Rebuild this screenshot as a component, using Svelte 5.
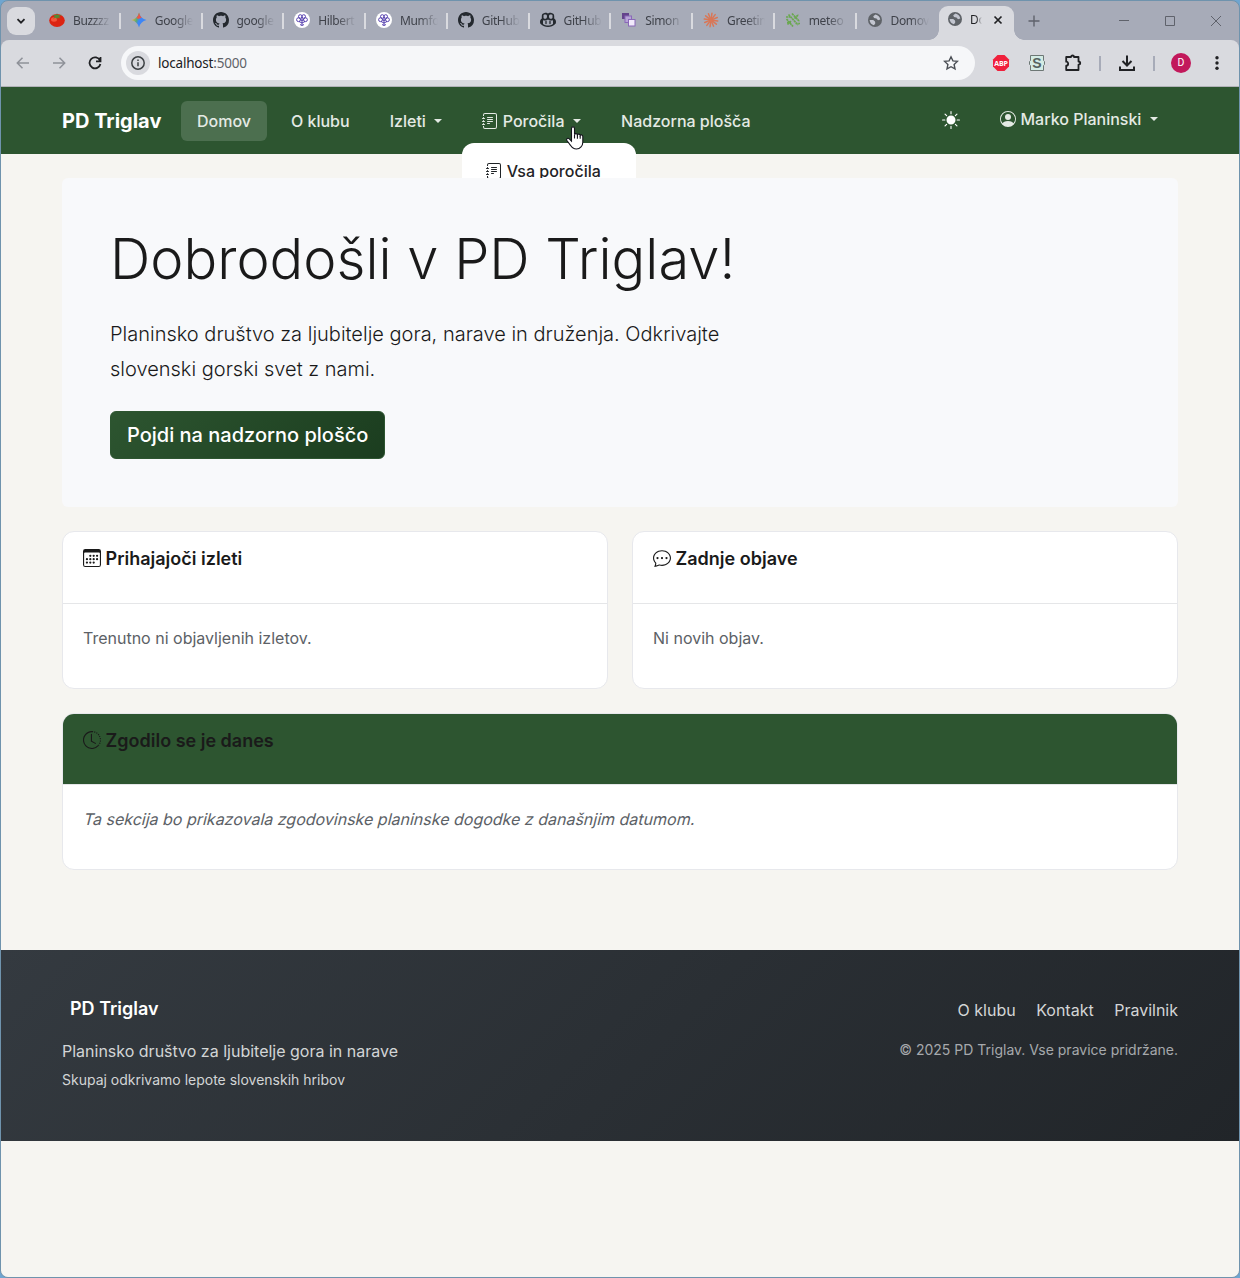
<script>
  const tabs = [
    { icon: 'tomato', title: 'Buzzzz' },
    { icon: 'gemini', title: 'Google' },
    { icon: 'github', title: 'google' },
    { icon: 'brain', title: 'Hilbert' },
    { icon: 'brain', title: 'Mumfo' },
    { icon: 'github', title: 'GitHub' },
    { icon: 'copilot', title: 'GitHub' },
    { icon: 'squares', title: 'Simon' },
    { icon: 'burst', title: 'Greetin' },
    { icon: 'meteor', title: 'meteo' },
    { icon: 'globe', title: 'Domov' }
  ];
  const rays = Array.from({ length: 12 }, (_, i) => i * 30);
  const footerLinks = ['O klubu', 'Kontakt', 'Pravilnik'];
</script>

{#snippet favicon(name)}
  <svg class="fav" viewBox="0 0 16 16" width="16" height="16">
    {#if name === 'tomato'}
      <ellipse cx="8" cy="8.5" rx="7.8" ry="6.500" fill="#dc2412" />
      <ellipse cx="5" cy="7.5" rx="3" ry="2.2" fill="#f5543a" />
      <path d="M8 1l.8 2.3 4-.6-2.9 1.8 1.7 2.1-3-1.2L8 8 7.3 5.5 4 6.7l2-2.2-2.8-1.7 4 .5z" fill="#4e8f35" />
    {:else if name === 'gemini'}
      <defs>
        <linearGradient id="gem" x1="0" y1="0.2" x2="1" y2="0.6">
          <stop offset="0.1" stop-color="#f5b72c" /><stop offset="0.4" stop-color="#58a878" /><stop offset="0.55" stop-color="#3d86f6" />
        </linearGradient>
      </defs>
      <path d="M8 .5C9 4.500 11.500 7 15.500 8 11.500 9 9 11.500 8 15.500 7 11.500 4.500 9 .5 8 4.500 7 7 4.500 8 .5z" fill="url(#gem)" />
      <path d="M8 .5C8.600 3 9.600 4.700 10.700 5.700L7 7 5.500 5.700C7 4.500 7.600 2.500 8 .5z" fill="#ec5548" />
    {:else if name === 'github'}
      <path fill="#24292f" d="M8 0C3.58 0 0 3.58 0 8c0 3.54 2.29 6.53 5.47 7.59.4.07.55-.17.55-.38 0-.19-.01-.82-.01-1.49-2.01.37-2.53-.49-2.69-.94-.09-.23-.48-.94-.82-1.13-.28-.15-.68-.52-.01-.53.63-.01 1.08.58 1.23.82.72 1.21 1.87.87 2.33.66.07-.52.28-.87.51-1.07-1.78-.2-3.64-.89-3.64-3.95 0-.87.31-1.59.82-2.15-.08-.2-.36-1.02.08-2.12 0 0 .67-.21 2.2.82.64-.18 1.32-.27 2-.27s1.36.09 2 .27c1.53-1.04 2.2-.82 2.2-.82.44 1.100.16 1.920.08 2.120.51.56.82 1.270.82 2.150 0 3.070-1.870 3.750-3.650 3.950.29.25.54.73.54 1.480 0 1.070-.01 1.930-.01 2.200 0 .21.15.46.55.38A8.010 8.010 0 0 0 16 8c0-4.420-3.580-8-8-8z" />
    {:else if name === 'brain'}
      <circle cx="8" cy="8" r="8" fill="#fff" />
      <g fill="none" stroke="#4a32a8" stroke-width=".9">
        <circle cx="6.300" cy="4.500" r="1.800" /><circle cx="9.700" cy="4.500" r="1.800" />
        <circle cx="4.500" cy="7.700" r="1.900" /><circle cx="11.500" cy="7.700" r="1.900" />
        <path d="M8 5v8.500M5 9.500l3 1.500 3-1.500M6 12.500l2 1 2-1M6 7.500l2 1 2-1" />
      </g>
    {:else if name === 'copilot'}
      <path fill="#24292f" fill-rule="evenodd" d="M4.500 1C6.300.6 7.500 1.100 8 1.700 8.500 1.100 9.700.6 11.500 1c2 .3 2.700 1.600 2.700 3.200v2.300C15.500 7.300 16 8.600 16 10c0 .9-.2 1.500-.7 2-1.800 1.800-4.700 3-7.300 3s-5.500-1.200-7.300-3C.2 11.500 0 10.900 0 10c0-1.400.5-2.700 1.800-3.500V4.200C1.800 2.600 2.500 1.300 4.500 1zM3.500 3.500v2c0 1 .7 1.300 1.700 1.300S7 6 7 4.500 6.500 2.600 5.300 2.600 3.500 2.800 3.500 3.500zM12.500 3.500c0-.7-.6-.9-1.800-.9S9 3 9 4.500s.8 2.300 1.800 2.300 1.700-.3 1.700-1.300zM3 8.200V12c1.500 1 3.300 1.600 5 1.600s3.500-.6 5-1.600V8.200C11 8.800 9 8.600 8 7.500 7 8.600 5 8.800 3 8.200z" />
      <path d="M6 9.500v2M10 9.500v2" stroke="#24292f" stroke-width="1.300" stroke-linecap="round" />
    {:else if name === 'squares'}
      <rect x="1" y="1" width="7" height="6" fill="#64438c" />
      <rect x="4" y="4" width="6.500" height="6.500" fill="#b8a4d8" stroke="#8a68b8" />
      <rect x="7.500" y="7.500" width="6.500" height="6.500" fill="#f1e9fb" stroke="#8a68b8" />
    {:else if name === 'burst'}
      <g stroke="#d97757" stroke-width="1.500" stroke-linecap="round">
        {#each rays as r}<path d="M8 7V1.200" transform="rotate({r + 8} 8 8)" />{/each}
      </g>
      <circle cx="8" cy="8" r="2.200" fill="#d97757" />
    {:else if name === 'meteor'}
      <g stroke="#6aa84f" stroke-width="1.700" stroke-dasharray="2.200 .5">
        <path d="M3.500 2.500l9.500 10.500M2.500 12.500l3.500-3.500M9.500 6.500l4-4M7 1.500l7.500 8M1.500 7l6.500 7.500M1 5h4M10.500 11.500h4.500M2 10.500h4" />
      </g>
    {:else}
      <circle cx="8" cy="8" r="7" fill="#5f6368" />
      <path d="M8.500 2.500C11 3 13 5 13.300 7.500L11 8.200 9.500 6.500 7 6l-.8-1.700zM2.600 8h3.600l1.800 1.400.3 1.800L7 13.200C4.500 12.800 2.700 10.500 2.600 8z" fill="#c3c6d0" />
    {/if}
  </svg>
{/snippet}

{#snippet journal()}
  <svg class="bi" viewBox="0 0 16 16" fill="currentColor">
    <path d="M5 10.500a.5.5 0 0 1 .5-.5h2a.5.5 0 0 1 0 1h-2a.5.5 0 0 1-.5-.5m0-2a.5.5 0 0 1 .5-.5h5a.5.5 0 0 1 0 1h-5a.5.5 0 0 1-.5-.5m0-2a.5.5 0 0 1 .5-.5h5a.5.5 0 0 1 0 1h-5a.5.5 0 0 1-.5-.5m0-2a.5.5 0 0 1 .5-.5h5a.5.5 0 0 1 0 1h-5a.5.5 0 0 1-.5-.5" />
    <path d="M3 0h10a2 2 0 0 1 2 2v12a2 2 0 0 1-2 2H3a2 2 0 0 1-2-2v-1h1v1a1 1 0 0 0 1 1h10a1 1 0 0 0 1-1V2a1 1 0 0 0-1-1H3a1 1 0 0 0-1 1v1H1V2a2 2 0 0 1 2-2" />
    <path d="M1 5v-.5a.5.5 0 0 1 1 0V5h.5a.5.5 0 0 1 0 1h-2a.5.5 0 0 1 0-1zm0 3v-.5a.5.5 0 0 1 1 0V8h.5a.5.5 0 0 1 0 1h-2a.5.5 0 0 1 0-1zm0 3v-.5a.5.5 0 0 1 1 0v.5h.5a.5.5 0 0 1 0 1h-2a.5.5 0 0 1 0-1z" />
  </svg>
{/snippet}

<div class="desktop">
  <div class="window">
    <div class="tabstrip">
      <button class="tabsearch" aria-label="Search tabs">
        <svg width="10" height="10" viewBox="0 0 10 10"><path d="M1.500 3.200L5 6.700l3.500-3.500" fill="none" stroke="#202124" stroke-width="1.800" /></svg>
      </button>
      <div class="tabs">
        {#each tabs as tab, i}
          <div class="tab" class:last={i === tabs.length - 1}>
            {@render favicon(tab.icon)}
            <span class="title">{tab.title}</span>
          </div>
        {/each}
      </div>
      <div class="tab-active">
        {@render favicon('globe')}
        <span class="title short">Do</span>
        <svg width="10" height="10" viewBox="0 0 10 10"><path d="M1.500 1.500l7 7M8.500 1.500l-7 7" stroke="#202124" stroke-width="1.700" /></svg>
      </div>
      <svg class="plus" width="12" height="12" viewBox="0 0 12 12"><path d="M6 .5v11M.5 6h11" stroke="#5f626b" stroke-width="1.400" /></svg>
      <div class="controls">
        <svg width="12" height="12" viewBox="0 0 12 12"><path d="M1 5.500h10" stroke="#5f626b" /></svg>
        <svg width="12" height="12" viewBox="0 0 12 12"><path d="M1.500 1.500h9v9h-9z" fill="none" stroke="#5f626b" /></svg>
        <svg width="12" height="12" viewBox="0 0 12 12"><path d="M1 1l10 10M11 1L1 11" stroke="#5f626b" /></svg>
      </div>
    </div>

    <div class="toolbar">
      <div class="history">
        <svg width="14" height="14" viewBox="0 0 14 14" fill="none" stroke="#8f9299" stroke-width="1.500"><path d="M13 7H1.500M6.500 1.700L1.300 7l5.200 5.300" /></svg>
        <svg width="14" height="14" viewBox="0 0 14 14" fill="none" stroke="#8f9299" stroke-width="1.500"><path d="M1 7h11.500M7.500 1.700L12.700 7l-5.200 5.300" /></svg>
        <svg width="14" height="14" viewBox="0 0 14 14" fill="none" stroke="#202124" stroke-width="1.800"><path d="M12 4.500A5.500 5.500 0 1 0 12.400 8M12.500 1v4.300H8" /></svg>
      </div>
      <div class="omnibox">
        <span class="info">
          <svg width="14" height="14" viewBox="0 0 14 14"><circle cx="7" cy="7" r="6.200" fill="none" stroke="#3c4043" stroke-width="1.500" /><path d="M7 6.200v4M7 3.500v1.500" stroke="#3c4043" stroke-width="1.500" /></svg>
        </span>
        <span class="url">localhost<em>:5000</em></span>
        <svg class="star" width="16" height="16" viewBox="0 0 16 16"><path d="M8 1.800l1.900 4.100 4.500.5-3.300 3.100.9 4.400L8 11.700l-4 2.200.9-4.400L1.600 6.400l4.500-.5z" fill="none" stroke="#4c5056" stroke-width="1.400" /></svg>
      </div>
      <div class="extensions">
        <svg width="18" height="18" viewBox="0 0 18 18"><path d="M5.500 1h7L17 5.500v7L12.500 17h-7L1 12.500v-7z" fill="#f0203c" /><text x="9" y="11.900" text-anchor="middle" class="abp">ABP</text></svg>
        <svg width="18" height="18" viewBox="0 0 18 18"><path d="M2.500 1.500h13v5l1 1v3l-1 1v5h-13v-5l-1-1v-3l1-1z" fill="#d3ebe4" stroke="#6d7775" /><text x="9" y="14.200" text-anchor="middle" class="sext">S</text></svg>
        <svg width="18" height="18" viewBox="0 0 18 18"><path d="M2.200 3h4.800c0-2 3-2 3 0h4.500v4.500c2.300 0 2.300 3.200 0 3.200V16H2.200v-4.300c2.600 0 2.600-4 0-4z" fill="none" stroke="#202124" stroke-width="1.800" stroke-linejoin="round" /></svg>
        <i class="sep"></i>
        <svg width="18" height="18" viewBox="0 0 18 18" fill="none" stroke="#202124" stroke-width="2"><path d="M9 1.500v9.500M4.500 7L9 11.500 13.500 7M2 12.500V16h14v-3.500" /></svg>
        <i class="sep"></i>
        <span class="avatar">D</span>
        <svg width="4" height="16" viewBox="0 0 4 16" fill="#202124"><circle cx="2" cy="2.700" r="1.700" /><circle cx="2" cy="8" r="1.700" /><circle cx="2" cy="13.300" r="1.700" /></svg>
      </div>
    </div>

    <div class="page">
      <nav class="navbar">
        <span class="brand">PD Triglav</span>
        <div class="links">
          <a class="link active" href="#domov">Domov</a>
          <a class="link" href="#klub">O klubu</a>
          <a class="link caret" href="#izleti">Izleti</a>
          <div class="dropdown">
            <a class="link caret" href="#porocila">{@render journal()} Poročila</a>
            <div class="menu">
              <div class="item">{@render journal()} Vsa poročila</div>
            </div>
            <svg class="pointer" width="20" height="25" viewBox="0 0 20 25">
              <path d="M5.500 2.500c0-2.200 3-2.200 3 0v6c.3-1.200 2.700-1.200 2.900.3.500-1.100 2.600-.9 2.800.6.600-.9 2.600-.7 2.600 1.200v5.700c0 3.500-2.600 6.700-6.300 6.700-3 0-4.600-1.300-6-3.700L.9 14.500c-1-1.800 1.100-3 2.400-1.600l2.200 2.200z" fill="#fff" stroke="#14141c" stroke-width="1.100" />
              <path d="M8.500 8.500v4M11.400 9v3.700M14.200 9.800v3" stroke="#14141c" stroke-width="1.100" />
            </svg>
          </div>
          <a class="link" href="#plosca">Nadzorna plošča</a>
        </div>
        <div class="user">
          <svg class="sun" width="18" height="18" viewBox="0 0 16 16" fill="#fff"><path d="M8 12a4 4 0 1 0 0-8 4 4 0 0 0 0 8M8 0a.5.5 0 0 1 .5.5v2a.5.5 0 0 1-1 0v-2A.5.5 0 0 1 8 0m0 13a.5.5 0 0 1 .5.5v2a.5.5 0 0 1-1 0v-2A.5.5 0 0 1 8 13m8-5a.5.5 0 0 1-.5.5h-2a.5.5 0 0 1 0-1h2a.5.5 0 0 1 .5.5M3 8a.5.5 0 0 1-.5.5h-2a.5.5 0 0 1 0-1h2A.5.5 0 0 1 3 8m10.657-5.657a.5.5 0 0 1 0 .707l-1.414 1.415a.5.5 0 1 1-.707-.708l1.414-1.414a.5.5 0 0 1 .707 0m-9.193 9.193a.5.5 0 0 1 0 .707L3.050 13.657a.5.5 0 0 1-.707-.707l1.414-1.414a.5.5 0 0 1 .707 0m9.193 2.121a.5.5 0 0 1-.707 0l-1.414-1.414a.5.5 0 0 1 .707-.707l1.414 1.414a.5.5 0 0 1 0 .707M4.464 4.465a.5.5 0 0 1-.707 0L2.343 3.050a.5.5 0 1 1 .707-.707l1.414 1.414a.5.5 0 0 1 0 .708" /></svg>
          <a class="link caret account" href="#racun">
            <svg class="bi" viewBox="0 0 16 16" fill="currentColor"><path d="M11 6a3 3 0 1 1-6 0 3 3 0 0 1 6 0" /><path fill-rule="evenodd" d="M0 8a8 8 0 1 1 16 0A8 8 0 0 1 0 8m8-7a7 7 0 0 0-5.468 11.370C3.242 11.226 4.805 10 8 10s4.757 1.225 5.468 2.370A7 7 0 0 0 8 1" /></svg>
            Marko Planinski</a>
        </div>
      </nav>

      <main>
        <section class="hero">
          <h1>Dobrodošli v PD Triglav!</h1>
          <p>Planinsko društvo za ljubitelje gora, narave in druženja. Odkrivajte<br />slovenski gorski svet z nami.</p>
          <a class="cta" href="#plosca">Pojdi na nadzorno ploščo</a>
        </section>

        <div class="row">
          <section class="card">
            <h5>
              <svg class="bi" viewBox="0 0 16 16" fill="currentColor"><path d="M14 0H2a2 2 0 0 0-2 2v12a2 2 0 0 0 2 2h12a2 2 0 0 0 2-2V2a2 2 0 0 0-2-2M1 3.857C1 3.384 1.448 3 2 3h12c.552 0 1 .384 1 .857v10.286c0 .473-.448.857-1 .857H2c-.552 0-1-.384-1-.857z" />
                <path d="M6.500 7a1 1 0 1 0 0-2 1 1 0 0 0 0 2m3 0a1 1 0 1 0 0-2 1 1 0 0 0 0 2m3 0a1 1 0 1 0 0-2 1 1 0 0 0 0 2m-9 3a1 1 0 1 0 0-2 1 1 0 0 0 0 2m3 0a1 1 0 1 0 0-2 1 1 0 0 0 0 2m3 0a1 1 0 1 0 0-2 1 1 0 0 0 0 2m3 0a1 1 0 1 0 0-2 1 1 0 0 0 0 2m-9 3a1 1 0 1 0 0-2 1 1 0 0 0 0 2m3 0a1 1 0 1 0 0-2 1 1 0 0 0 0 2m3 0a1 1 0 1 0 0-2 1 1 0 0 0 0 2" /></svg>
              Prihajajoči izleti
            </h5>
            <p>Trenutno ni objavljenih izletov.</p>
          </section>
          <section class="card">
            <h5>
              <svg class="bi" viewBox="0 0 16 16" fill="currentColor"><path d="M5 8a1 1 0 1 1-2 0 1 1 0 0 1 2 0m4 0a1 1 0 1 1-2 0 1 1 0 0 1 2 0m3 1a1 1 0 1 0 0-2 1 1 0 0 0 0 2" /><path d="m2.165 15.803.02-.004c1.830-.363 2.948-.842 3.468-1.105A9 9 0 0 0 8 15c4.418 0 8-3.134 8-7s-3.582-7-8-7-8 3.134-8 7c0 1.760.743 3.370 1.970 4.600a10.400 10.400 0 0 1-.524 2.318l-.003.011a11 11 0 0 1-.244.637c-.079.186.074.394.273.362a22 22 0 0 0 .693-.125m.8-3.108a1 1 0 0 0-.287-.801C1.618 10.830 1 9.468 1 8c0-3.192 3.004-6 7-6s7 2.808 7 6-3.004 6-7 6a8 8 0 0 1-2.088-.272 1 1 0 0 0-.711.074c-.387.196-1.240.570-2.634.893a11 11 0 0 0 .398-2" /></svg>
              Zadnje objave
            </h5>
            <p>Ni novih objav.</p>
          </section>
        </div>

        <section class="card today">
          <h5>
            <svg class="bi" viewBox="0 0 16 16" fill="none" stroke="currentColor"><path d="M8 .5A7.500 7.500 0 1 0 13.500 13.100" /><path d="M8 .5A7.500 7.500 0 0 1 13.500 13.100" stroke-dasharray="1 1" /><path d="M7.500 3v6l3.500 2" stroke-linecap="round" /></svg>
            Zgodilo se je danes
          </h5>
          <p><span class="slanted">Ta sekcija bo prikazovala zgodovinske planinske dogodke z današnjim datumom.</span></p>
        </section>
      </main>

      <footer>
        <div>
          <h6>PD Triglav</h6>
          <p class="tagline">Planinsko društvo za ljubitelje gora in narave</p>
          <p class="small">Skupaj odkrivamo lepote slovenskih hribov</p>
        </div>
        <div class="legal">
          <div class="flinks">
            {#each footerLinks as link}<a href="#noga">{link}</a>{/each}
          </div>
          <p>© 2025 PD Triglav. Vse pravice pridržane.</p>
        </div>
      </footer>
    </div>
  </div>
</div>

<style>
  :global(body) { margin: 0; }
  .desktop { background: #6fa5d0; width: 1240px; height: 1278px; }
  .desktop, .desktop * { box-sizing: border-box; }
  .window { height: 1278px; border: 1px solid #6f93ad; border-radius: 8px; overflow: hidden; background: #a7abb8; display: flex; flex-direction: column; font-family: Inter, sans-serif; }
  a { text-decoration: none; color: inherit; }
  p, h1, h5, h6 { margin: 0; }
  svg { display: block; flex: none; }

  .tabstrip { height: 39px; flex: none; display: flex; align-items: center; padding-left: 6px; font: 12px "Noto Sans", sans-serif; letter-spacing: -.35px; color: #3f424a; }
  .tabsearch { width: 28px; height: 28px; border: 0; border-radius: 9px; background: #d9dadf; display: grid; place-items: center; padding: 0; margin-right: 4px; }
  .tabs { display: flex; width: 900px; flex: none; }
  .tab { display: flex; align-items: center; width: 81.750px; flex: none; height: 16px; padding-left: 10px; border-right: 2px solid #d9dadf; }
  .tab.last { border: 0; }
  .fav { position: relative; top: -1px; }
  .title { width: 38px; margin-left: 8px; overflow: hidden; white-space: nowrap; line-height: 18px; -webkit-mask-image: linear-gradient(90deg, #000 50%, transparent); mask-image: linear-gradient(90deg, #000 50%, transparent); }
  .title.short { width: 12px; margin: 0 11px 0 7px; }
  .tab-active { position: relative; width: 75px; height: 34px; flex: none; align-self: flex-end; background: #d9dadf; border-radius: 9px 9px 0 0; display: flex; align-items: center; padding: 0 0 6px 8px; color: #202124; }
  .tab-active::before, .tab-active::after { content: ""; position: absolute; bottom: 0; width: 10px; height: 10px; }
  .tab-active::before { right: 100%; background: radial-gradient(circle at 0 0, transparent 9.500px, #d9dadf 10px); }
  .tab-active::after { left: 100%; background: radial-gradient(circle at 100% 0, transparent 9.500px, #d9dadf 10px); }
  .plus { margin-left: 14px; }
  .controls { margin-left: auto; display: flex; gap: 34px; padding-right: 17px; }

  .toolbar { height: 47px; flex: none; display: flex; align-items: center; background: #d9dadf; border-radius: 8px 8px 0 0; border-bottom: 1px solid #b1b2b8; padding: 0 4px 0 15px; }
  .history { display: flex; gap: 22px; width: 105px; }
  .omnibox { width: 854px; height: 34px; border-radius: 17px; background: #f6f7f9; display: flex; align-items: center; padding: 0 16px 0 5px; }
  .info { width: 24px; height: 24px; border-radius: 50%; background: #d9dadf; display: grid; place-items: center; }
  .url { margin-left: 8px; flex: 1; font: 13.500px "Noto Sans", sans-serif; letter-spacing: -.2px; color: #202124; }
  .url em { font-style: normal; color: #5f6368; }
  .extensions { margin-left: 8px; display: grid; grid-template-columns: 36px 36px 36px 18px 36px 18px 36px 36px; place-items: center; }
  .abp { font: bold 7px "Open Sans", sans-serif; letter-spacing: -.2px; fill: #fff; }
  .sext { font: bold 14px "Liberation Sans", sans-serif; fill: #566360; }
  .sep { width: 2px; height: 15px; background: #a7abb8; }
  .avatar { width: 20px; height: 20px; border-radius: 50%; background: #c2185b; color: #fff; font: 10.500px/20px Roboto, sans-serif; text-align: center; }

  .page { flex: 1; background: #f6f5f1; color: #1a1a1a; font-size: 16px; }
  .navbar { height: 67px; background: #2d5530; padding: 0 61px; display: flex; align-items: center; color: #e4eae4; }
  .brand { width: 119px; font-size: 20px; font-weight: 700; color: #fff; }
  .links { display: flex; align-items: center; gap: 8px; }
  .link { display: block; height: 40px; line-height: 40px; padding: 0 16px; border-radius: 6px; font-weight: 500; white-space: nowrap; }
  .link.active { background: #4c6f4f; }
  .bi { display: inline-block; width: 1em; height: 1em; vertical-align: -.125em; }
  .caret::after { content: ""; display: inline-block; margin-left: 8.600px; vertical-align: 4px; border: 4.500px solid transparent; border-top-color: currentColor; border-bottom: 0; }
  .dropdown { position: relative; }
  .menu { position: absolute; left: -4px; top: 42px; width: 174px; height: 35px; overflow: hidden; background: #fff; border-radius: 12px 12px 0 0; color: #1f2326; }
  .item { padding: 16px 0 0 24px; line-height: 24px; font-weight: 500; white-space: nowrap; }
  .pointer { position: absolute; left: 100px; top: 25px; }
  .user { margin-left: auto; display: flex; align-items: center; gap: 24px; }
  .sun { margin-bottom: 2px; }
  .account { height: 44px; padding-right: 20px; }

  main { padding: 24px 61px 0; }
  .hero { height: 329px; border-radius: 6px; background: #f8f9fb; padding: 48px; }
  h1 { font-size: 56px; line-height: 67px; font-weight: 300; white-space: nowrap; }
  .hero p { margin-top: 24px; font-size: 20px; line-height: 35px; font-weight: 300; }
  .cta { display: inline-block; margin-top: 24px; height: 48px; padding: 0 16px; border: 1px solid #2d5530; border-radius: 6px; background: linear-gradient(135deg, #2d5530, #1b3d1f); color: #fff; font-size: 20px; line-height: 46px; font-weight: 500; white-space: nowrap; }
  .row { display: grid; grid-template-columns: 1fr 1fr; gap: 24px; margin: 24px 0; }
  .card { height: 158px; background: #fff; border: 1px solid #e7e8ec; border-radius: 12px; overflow: hidden; }
  .card h5 { height: 72px; padding: 16px 20px; border-bottom: 1px solid #e5e6e8; font-size: 18px; line-height: 22px; font-weight: 600; }
  .card p { padding: 21px 20px; line-height: 26px; color: #5c6166; }
  .today { height: 157px; }
  .today h5 { height: 71px; background: #2d5530; }
  .slanted { display: inline-block; transform: skewX(-14deg); transform-origin: 0 70%; }

  footer { margin-top: 80px; height: 191px; padding: 47px 61px; background: linear-gradient(135deg, #343a40, #212529); display: flex; justify-content: space-between; color: #d3d5d6; }
  h6 { padding-left: 8px; font-size: 18px; line-height: 24px; font-weight: 600; color: #fff; }
  .tagline { margin-top: 17px; line-height: 27px; }
  .small { margin-top: 3px; font-size: 14px; line-height: 24px; }
  .legal { text-align: right; }
  .flinks { display: flex; justify-content: flex-end; gap: 20.500px; line-height: 26px; }
  .legal p { margin-top: 14px; font-size: 14px; line-height: 26px; color: #a6a9ac; }
</style>
